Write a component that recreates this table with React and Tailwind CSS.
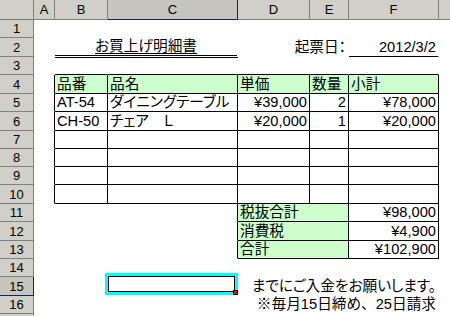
import React from "react";
import clsx from "clsx";

// column widths include the 1px right gridline
const W = {
  A: "w-[21px]",
  B: "w-[53px]",
  C: "w-[130px]",
  D: "w-[72px]",
  E: "w-[39px]",
  F: "w-[90px]",
  BC: "w-[183px]",
  DE: "w-[111px]",
  DF: "w-[201px]",
};

const GREEN = "bg-[#ccffcc]";

function Cell({ w, r, b, bottom, bg, right, center, className, children }) {
  return (
    <div
      className={clsx(
        "shrink-0 flex items-center px-[2px] whitespace-nowrap border-r",
        w,
        r ? "border-r-black" : "border-r-transparent",
        bottom || (b ? "border-b border-b-black" : "border-b border-b-transparent"),
        right && "justify-end",
        center && "justify-center",
        bg,
        className
      )}
    >
      {children}
    </div>
  );
}

function Row({ n, h, active, children }) {
  return (
    <div className={clsx("flex", h)}>
      <div
        className={clsx(
          "w-[34px] shrink-0 flex items-center justify-center border-r border-b text-[13px]",
          active ? "bg-[#c6c6be] border-[#0a246a]" : "bg-[#d0d0c8] border-[#808080]"
        )}
      >
        {n}
      </div>
      {children}
    </div>
  );
}

function ColHead({ w, label, active }) {
  return (
    <div
      className={clsx(
        "shrink-0 flex items-center justify-center border-r border-b text-[13px]",
        w,
        active ? "bg-[#c6c6be] border-[#0a246a]" : "bg-[#d0d0c8] border-[#808080]"
      )}
    >
      {label}
    </div>
  );
}

const items = [
  { code: "AT-54", name: "ダイニングテーブル", price: "¥39,000", qty: "2", sub: "¥78,000" },
  { code: "CH-50", name: "チェア　Ｌ", price: "¥20,000", qty: "1", sub: "¥20,000" },
  {},
  {},
  {},
  {},
];
const itemHeights = ["h-[18px]", "h-[19px]", "h-[18px]", "h-[18px]", "h-[18px]", "h-[19px]"];

const totals = [
  { label: "税抜合計", value: "¥98,000", h: "h-[18px]" },
  { label: "消費税", value: "¥4,900", h: "h-[19px]" },
  { label: "合計", value: "¥102,900", h: "h-[18px]" },
];

export default function App() {
  return (
    <div className="w-[450px] h-[316px] overflow-hidden bg-white text-black text-[14.67px] leading-[17px] font-['Liberation_Sans','Noto_Sans_CJK_JP',sans-serif] [font-feature-settings:'palt']">
      {/* column headers */}
      <div className="flex h-[20px]">
        <div className="w-[34px] shrink-0 bg-[#d0d0c8] border-r border-b border-[#808080]" />
        <ColHead w={W.A} label="A" />
        <ColHead w={W.B} label="B" />
        <ColHead w={W.C} label="C" active />
        <ColHead w={W.D} label="D" />
        <ColHead w={W.E} label="E" />
        <ColHead w={W.F} label="F" />
        <div className="flex-1 bg-[#d0d0c8] border-b border-[#808080]" />
      </div>

      <Row n="1" h="h-[18px]" />

      <Row n="2" h="h-[19px]">
        <Cell w={W.A} />
        {/* title sits on a double rule that spills 1px into row 3 */}
        <Cell
          w={W.BC}
          center
          bottom="border-b-[3px] border-b-black border-double"
          className="h-[20px]"
        >
          <span className="underline underline-offset-2">お買上げ明細書</span>
        </Cell>
        <Cell w={W.DE} right>
          起票日：
        </Cell>
        <Cell w={W.F} right b>
          2012/3/2
        </Cell>
      </Row>

      <Row n="3" h="h-[18px]">
        <Cell w={W.A} />
        <Cell w={W.B} b />
        <Cell w={W.C} b />
        <Cell w={W.D} b />
        <Cell w={W.E} b />
        <Cell w={W.F} b />
      </Row>

      <Row n="4" h="h-[19px]">
        <Cell w={W.A} r />
        <Cell w={W.B} r b bg={GREEN}>品番</Cell>
        <Cell w={W.C} r b bg={GREEN}>品名</Cell>
        <Cell w={W.D} r b bg={GREEN}>単価</Cell>
        <Cell w={W.E} r b bg={GREEN}>数量</Cell>
        <Cell w={W.F} r b bg={GREEN}>小計</Cell>
      </Row>

      {items.map((it, i) => (
        <Row key={i} n={String(i + 5)} h={itemHeights[i]}>
          <Cell w={W.A} r />
          <Cell w={W.B} r b>{it.code}</Cell>
          <Cell w={W.C} r b>{it.name}</Cell>
          <Cell w={W.D} r b right>{it.price}</Cell>
          <Cell w={W.E} r b right>{it.qty}</Cell>
          <Cell w={W.F} r b right>{it.sub}</Cell>
        </Row>
      ))}

      {totals.map((t, i) => (
        <Row key={t.label} n={String(i + 11)} h={t.h}>
          <Cell w={W.A} />
          <Cell w={W.B} />
          <Cell w={W.C} r />
          <Cell w={W.DE} r b bg={GREEN}>{t.label}</Cell>
          <Cell w={W.F} r b right>{t.value}</Cell>
        </Row>
      ))}

      <Row n="14" h="h-[18px]" />

      <Row n="15" h="h-[19px]" active>
        <Cell w={W.A} />
        <Cell w={W.B} />
        <Cell w={W.C} className="relative">
          {/* active cell frame + fill handle */}
          <div className="absolute -left-[3px] -top-[4px] -right-[1px] bottom-0 border-[3px] border-[#00ffff]">
            <div className="h-full w-full border border-black" />
          </div>
          <div className="absolute -right-[1px] bottom-0 w-[5px] h-[5px] bg-[#ff0000] border border-black" />
        </Cell>
        <Cell w={W.DF} right>
          までにご入金をお願いします。
        </Cell>
      </Row>

      <Row n="16" h="h-[18px]">
        <Cell w={W.A} />
        <Cell w={W.B} />
        <Cell w={W.C} />
        <Cell w={W.DF} right>
          ※毎月15日締め<span className="[font-feature-settings:normal]">、</span>25日請求
        </Cell>
      </Row>

      <Row n="" h="h-[18px]" />
    </div>
  );
}
